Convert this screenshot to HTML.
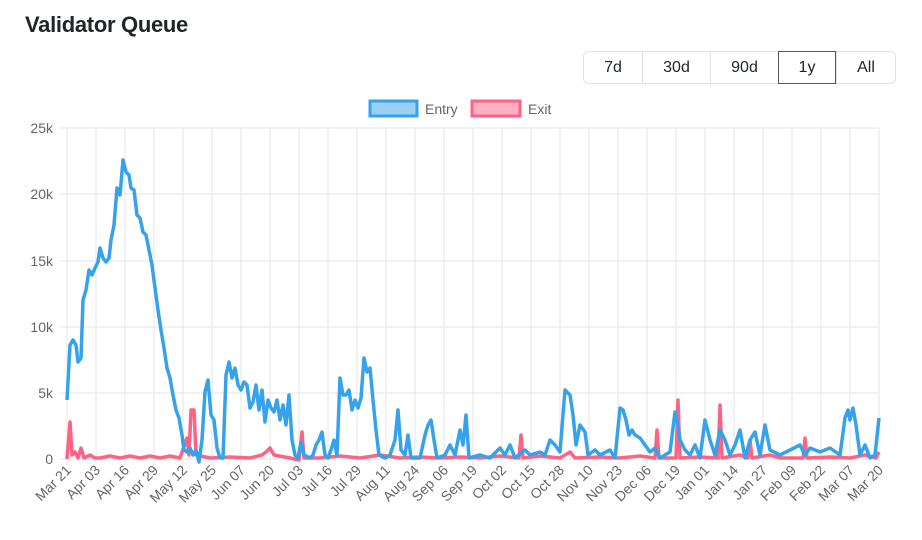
<!DOCTYPE html>
<html><head><meta charset="utf-8"><style>
body{margin:0;background:#fff;width:922px;height:540px;overflow:hidden;font-family:"Liberation Sans",sans-serif}
h1{position:absolute;left:25px;top:12px;margin:0;font-size:22px;font-weight:bold;color:#212529;letter-spacing:-0.3px}
.grp{position:absolute;left:583px;top:51px;height:33px;display:flex;border:1px solid #dee2e6;border-radius:6px;box-sizing:border-box}
.grp div{height:31px;line-height:31px;text-align:center;font-size:16px;color:#212529;border-left:1px solid #dee2e6;box-sizing:border-box}
.grp div:first-child{border-left:none}
.grp .a{border:1px solid #555;height:33px;margin-top:-1px;line-height:31px}
</style></head><body>
<h1>Validator Queue</h1>
<div class="grp"><div style="width:58px">7d</div><div style="width:68px">30d</div><div style="width:68px">90d</div><div class="a" style="width:58px">1y</div><div style="width:59px">All</div></div>
<svg width="922" height="540" style="position:absolute;left:0;top:0" font-family="Liberation Sans, sans-serif">
<rect x="370" y="101" width="47" height="15" fill="#9ad0f5" stroke="#36a2eb" stroke-width="3"/>
<text x="425" y="114" font-size="14" fill="#666">Entry</text>
<rect x="472" y="101" width="48" height="15" fill="#ffb1c1" stroke="#ff6384" stroke-width="3"/>
<text x="528" y="114" font-size="14" fill="#666">Exit</text>
<g stroke="#e6e6e6" stroke-width="1">
<line x1="60" y1="128" x2="879" y2="128"/><line x1="60" y1="194" x2="879" y2="194"/><line x1="60" y1="261" x2="879" y2="261"/><line x1="60" y1="327" x2="879" y2="327"/><line x1="60" y1="393" x2="879" y2="393"/><line x1="60" y1="459" x2="879" y2="459"/>
</g>
<g id="vg" stroke="#e6e6e6" stroke-width="1"></g>
<g font-size="14" fill="#666" text-anchor="end">
<text x="53" y="133">25k</text><text x="53" y="199">20k</text><text x="53" y="266">15k</text><text x="53" y="332">10k</text><text x="53" y="398">5k</text><text x="53" y="464">0</text>
</g>
<g id="xl" font-size="14" fill="#666" text-anchor="end"></g>
<polyline fill="none" stroke="#ff6384" stroke-width="3.5" stroke-linejoin="round" points="67,459 70,422 72,455 75,452 78,458 81,448 84,458 90,455 95,458 100,458 110,456 120,458 130,456 140,458 150,456 160,458 170,456 180,458 187,438 189,455 191,410 194,410 196,455 210,458 230,457 250,458 262,455 266,452 270,448 274,455 290,458 299,460 302,432 304,458 320,458 340,456 360,458 380,455 400,458 420,457 440,458 460,457 480,458 500,456 519,458 521,435 523,458 540,456 560,458 570,452 575,458 600,457 620,458 640,456 655,458 657,430 659,458 676,458 678,400 680,458 700,457 718,458 720,405 722,458 740,455 748,458 750,440 752,458 770,455 780,458 803,458 805,438 807,458 830,457 850,458 865,455 876,458 879,452"/>
<polyline fill="none" stroke="#36a2eb" stroke-width="3.5" stroke-linejoin="round" points="67,400 70,345 73,340 76,345 78,362 81,358 83,300 86,290 89,270 92,275 95,268 98,262 100,248 103,258 106,262 109,258 111,240 114,225 117,188 120,195 123,160 126,172 129,175 131,188 134,190 137,215 140,218 143,232 146,235 149,250 152,265 155,288 158,310 161,330 164,348 167,368 170,378 173,395 176,410 179,418 182,435 184,450 187,452 190,448 193,455 196,450 199,462 202,440 205,392 208,380 211,415 214,420 217,448 220,458 223,458 226,375 229,362 232,378 235,368 238,385 241,390 244,382 247,385 250,408 253,402 256,385 259,410 262,390 265,422 268,400 271,408 274,412 277,400 280,420 283,405 286,425 289,395 292,440 295,455 298,458 301,442 304,455 310,458 313,455 316,445 319,440 322,432 325,455 328,458 331,450 334,440 337,455 340,378 343,395 346,395 349,390 352,410 355,400 358,408 361,398 364,358 367,372 370,368 373,400 376,430 379,455 385,458 390,455 395,440 398,410 401,450 405,455 408,435 411,458 420,458 425,435 428,425 431,420 434,440 437,458 445,455 450,445 455,455 460,430 463,445 466,415 469,458 480,455 490,458 500,448 505,455 510,445 515,458 525,450 530,455 540,452 545,455 550,440 555,445 560,452 565,390 570,395 573,415 576,445 580,425 585,432 588,455 595,450 600,455 610,450 615,458 620,408 623,410 626,420 629,435 632,430 635,435 640,438 645,445 650,452 655,448 660,458 670,452 675,412 678,425 680,440 685,450 690,455 695,445 700,458 705,420 710,440 715,455 720,430 725,440 730,455 735,445 740,430 745,458 750,440 755,432 760,455 765,425 770,450 780,455 790,450 800,445 805,455 810,448 820,452 830,448 840,455 845,418 848,410 850,420 853,408 856,425 860,455 865,445 870,458 875,455 879,418"/>
</svg>
<script>
var L="Mar 21,Apr 03,Apr 16,Apr 29,May 12,May 25,Jun 07,Jun 20,Jul 03,Jul 16,Jul 29,Aug 11,Aug 24,Sep 06,Sep 19,Oct 02,Oct 15,Oct 28,Nov 10,Nov 23,Dec 06,Dec 19,Jan 01,Jan 14,Jan 27,Feb 09,Feb 22,Mar 07,Mar 20".split(",");
var ns="http://www.w3.org/2000/svg",vg=document.getElementById("vg"),xl=document.getElementById("xl");
L.forEach(function(t,i){var x=67+i*29;var l=document.createElementNS(ns,"line");l.setAttribute("x1",x);l.setAttribute("x2",x);l.setAttribute("y1",128);l.setAttribute("y2",465);vg.appendChild(l);
var e=document.createElementNS(ns,"text");e.setAttribute("transform","translate("+(x+5)+",471) rotate(-45)");e.textContent=t;xl.appendChild(e);});
</script>
</body></html>
